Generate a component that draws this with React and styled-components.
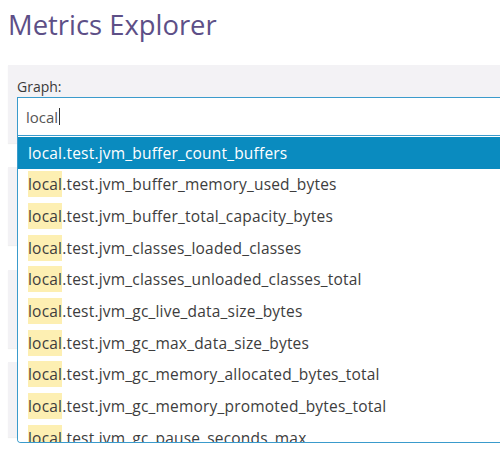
import React from "react";
import styled, { createGlobalStyle } from "styled-components";

const Global = createGlobalStyle`
  html, body { margin: 0; padding: 0; background: #fff; overflow: hidden; }
  body { font-family: "Open Sans", "Liberation Sans", sans-serif; color: #444; }
`;

const Page = styled.div`
  width: 500px;
  height: 450px;
  overflow: hidden;
  padding: 0 0 0 8px;
  box-sizing: border-box;
`;

const Title = styled.h1`
  margin: 0;
  height: 65px;
  padding-top: 6px;
  box-sizing: border-box;
  font-size: 27.4px;
  line-height: 38px;
  font-weight: 400;
  color: #5d4f87;
`;

const Panel = styled.section`
  width: 620px;
  height: ${(p) => p.$h}px;
  margin-top: ${(p) => p.$mt}px;
  background: #f3f2f5;
  box-sizing: border-box;
  padding: 12px 0 0 9px;
  position: relative;
  box-shadow: 0 1px 1px rgba(0, 0, 0, 0.06);
`;

const Label = styled.div`
  font-size: 14px;
  line-height: 20px;
  color: #3a3a3a;
`;

const Field = styled.div`
  position: relative;
`;

const Input = styled.div`
  height: 39px;
  border: 1px solid #3a9bcc;
  background: #fff;
  box-sizing: border-box;
  display: flex;
  align-items: center;
  padding-left: 8px;
  font-size: 15px;
  color: #555;
`;

const Caret = styled.span`
  display: inline-block;
  width: 1px;
  height: 17px;
  background: #333;
  margin-left: 1px;
`;

const Menu = styled.ul`
  position: absolute;
  top: 100%;
  left: 0;
  right: 0;
  margin: 0;
  padding: 1px 0 0;
  list-style: none;
  height: 307px;
  overflow: hidden;
  background: #fff;
  border: 1px solid #3a9bcc;
  border-top: none;
  border-radius: 0 0 4px 4px;
  box-sizing: border-box;
  z-index: 2;
`;

const Item = styled.li`
  height: 31.67px;
  display: flex;
  align-items: center;
  padding-left: 10px;
  font-size: 15.5px;
  letter-spacing: 0.2px;
  white-space: nowrap;
  background: ${(p) => (p.$active ? "#0a8bbf" : "#fff")};
  color: ${(p) => (p.$active ? "#fff" : "#3d3d3d")};
`;

const Mark = styled.mark`
  background: ${(p) => (p.$active ? "transparent" : "#fdefb2")};
  color: inherit;
  padding: 2px 0;
`;

const items = [
  "jvm_buffer_count_buffers",
  "jvm_buffer_memory_used_bytes",
  "jvm_buffer_total_capacity_bytes",
  "jvm_classes_loaded_classes",
  "jvm_classes_unloaded_classes_total",
  "jvm_gc_live_data_size_bytes",
  "jvm_gc_max_data_size_bytes",
  "jvm_gc_memory_allocated_bytes_total",
  "jvm_gc_memory_promoted_bytes_total",
  "jvm_gc_pause_seconds_max",
];

export default function App() {
  return (
    <Page>
      <Global />
      <Title>Metrics Explorer</Title>
      <Panel $h={78} $mt={0}>
        <Label>Graph:</Label>
        <Field>
          <Input>
            local
            <Caret />
          </Input>
          <Menu>
            {items.map((name, i) => (
              <Item key={name} $active={i === 0}>
                <Mark $active={i === 0}>local</Mark>.test.{name}
              </Item>
            ))}
          </Menu>
        </Field>
      </Panel>
      <Panel $h={78} $mt={24} />
      <Panel $h={78} $mt={25} />
      <Panel $h={75} $mt={14} />
    </Page>
  );
}
